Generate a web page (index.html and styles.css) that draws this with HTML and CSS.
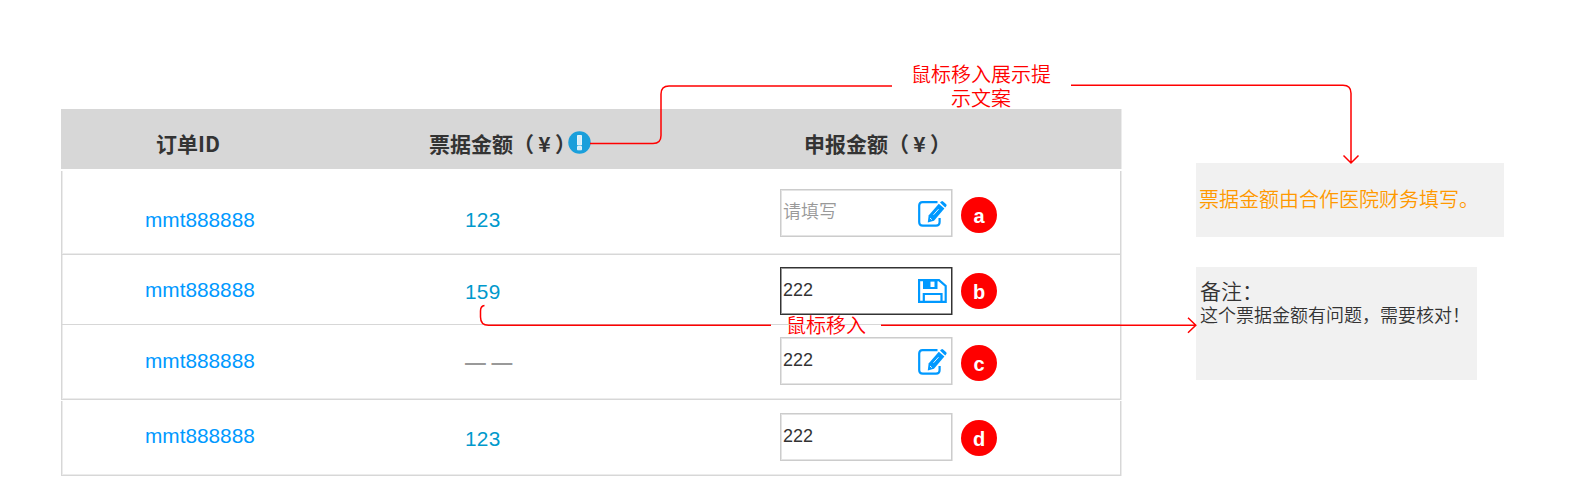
FILE: index.html
```
<!DOCTYPE html>
<html lang="zh-CN">
<head>
<meta charset="utf-8">
<title>票据金额</title>
<link rel="stylesheet" href="styles.css">
</head>
<body>
<svg class="defs" width="0" height="0">
  <symbol id="edit" viewBox="0 0 29 26">
    <path d="M19.500 1.200H4.500Q1.200 1.200 1.200 4.500V21Q1.200 24.600 4.800 24.600H18Q21.600 24.600 21.600 21V17" fill="none" stroke="#09f" stroke-width="2.200"/>
    <path d="M20.800 2.800L26.400 7.600L16 19.800L9.800 21.500L10.600 14.400Z" fill="#09f"/>
    <path d="M22 1.600L23.300 .4Q24.300 -.3 25.400 .7L28.200 3.300Q29 4.300 28.200 5.300L27.200 6.500Z" fill="#09f"/>
    <path d="M15.500 13.800L20.500 8.200M12 17L13.800 18.700" stroke="#fff" stroke-width=".9"/>
  </symbol>
  <symbol id="save" viewBox="0 0 29 24">
    <path d="M1.100 1.100H21L27.700 7V22.900H1.100Z" fill="none" stroke="#09f" stroke-width="2.200"/>
    <path d="M5 1H19.500V10H5ZM12.500 2.500V8H16.500V2.500Z" fill="#09f" fill-rule="evenodd"/>
    <path d="M5.800 22V15H23.500V22" fill="none" stroke="#09f" stroke-width="2.200"/>
  </symbol>
</svg>
<main class="board">
  <section class="table">
    <header class="row head">
      <div class="order">订单ID</div>
      <div class="bill">票据金额（<span class="yen">¥</span>）<svg class="info" viewBox="0 0 23 23"><circle cx="11.500" cy="11.500" r="11.200" fill="#1a9fdb"/><path d="M9.500 4.500H13.500V14H9.500ZM9.500 15.500H13.500V18.800H9.500Z" fill="#d7edf7" stroke="#e4f3fa"/></svg></div>
      <div class="claim">申报金额（<span class="yen">¥</span>）</div>
    </header>
    <div class="row r1">
      <div class="order">mmt888888</div>
      <div class="bill">123</div>
      <div class="field empty">请填写<svg class="icon edit"><use href="#edit"/></svg></div>
      <div class="badge">a</div>
    </div>
    <div class="row r2">
      <div class="order">mmt888888</div>
      <div class="bill">159</div>
      <div class="field active">222<svg class="icon save"><use href="#save"/></svg></div>
      <div class="badge">b</div>
    </div>
    <div class="row r3">
      <div class="order">mmt888888</div>
      <div class="bill none">— —</div>
      <div class="field">222<svg class="icon edit"><use href="#edit"/></svg></div>
      <div class="badge">c</div>
    </div>
    <div class="row r4">
      <div class="order">mmt888888</div>
      <div class="bill">123</div>
      <div class="field">222</div>
      <div class="badge">d</div>
    </div>
  </section>
  <aside class="notes">
    <div class="note tip">票据金额由合作医院财务填写。</div>
    <div class="note remark"><div class="title">备注：</div><div>这个票据金额有问题，需要核对！</div></div>
  </aside>
</main>
<svg class="wires" viewBox="0 0 1591 496">
  <path d="M590 143.500H653Q661 143.500 661 135.500V94Q661 86 669 86H892"/>
  <path d="M1071 85.200H1343Q1351 85.200 1351 93.200V163M1343.500 155.500L1351 163L1358.500 155.500"/>
  <path d="M484.500 305.500Q480.500 306 480.500 311V317Q480.500 325.300 488.500 325.300H771"/>
  <path d="M881 325.300H1196M1188 317.800L1195.800 325.300L1188 332.800"/>
</svg>
<div class="label hover-tip">鼠标移入展示提<br>示文案</div>
<div class="label hover">鼠标移入</div>
</body>
</html>
```
FILE: styles.css
```
* { box-sizing: border-box; }
body {
  margin: 0;
  width: 1591px;
  height: 496px;
  position: relative;
  overflow: hidden;
  background: #fff;
  color: #333;
  font-family: "Liberation Sans", "Noto Sans CJK SC", sans-serif;
}
.defs { position: absolute; }
.board { display: flex; padding: 109px 0 0 61px; }
.table { width: 1060px; }
.row {
  display: grid;
  grid-template-columns: 83px 320px 315px 181px 36px;
  border: 1px solid #d7d7d7;
  border-top: 0;
  box-shadow: inset 1px 0 #ececec, inset 0 -1px #ececec, 1px 0 #ececec;
  align-items: start;
}
.row > .order { grid-column: 2; }
.row .order, .row .bill { font-size: 20.8px; line-height: 24px; white-space: nowrap; }
.order { color: #09f; letter-spacing: 0; }
.bill { color: #0099cc; letter-spacing: .3px; }
.head {
  height: 60px;
  margin-bottom: 2px;
  border: 0;
  box-shadow: 1px 0 #ececec;
  background: #d7d7d7;
  grid-template-columns: 95px 273px 375px 200px;
  font-family: "Noto Sans CJK SC", sans-serif;
  font-weight: bold;
}
.head > div, .head .order, .head .bill {
  display: flex;
  padding-top: 18px;
  color: #333;
  font-size: 21px;
  line-height: 32px;
  letter-spacing: 0;
}
.yen { width: 21px; text-align: center; }
.info { width: 23px; height: 23px; margin: 4px 0 0 -8px; }
.r1 { height: 84px; }
.r2 { height: 70px; box-shadow: inset 1px 0 #ececec, 1px 0 #ececec; }
.r3 { height: 75px; margin-bottom: 1px; }
.r4 { height: 75px; }
.r1 .order, .r1 .bill { padding-top: 37px; }
.r2 .order { padding-top: 23px; }
.r2 .bill { padding-top: 25px; }
.r3 .order { padding-top: 24px; }
.r3 .bill { padding-top: 25px; }
.r4 .order { padding-top: 23px; }
.r4 .bill { padding-top: 26px; }
.row .none { color: #999; font-weight: bold; letter-spacing: 0; }
.field {
  width: 172px;
  height: 48px;
  margin-top: 12px;
  padding: 0 4px 3px 2px;
  display: flex;
  align-items: center;
  justify-content: space-between;
  border: 1px solid #ccc;
  box-shadow: inset 1px 1px #e4e4e4, inset 0 -1px #e4e4e4, 1px 0 #e4e4e4;
  font-size: 18px;
  line-height: 24px;
}
.r1 .field { margin-top: 18px; }
.empty { color: #999; font-weight: 350; }
.active { border-color: #333; box-shadow: inset 1px 1px #999, inset 0 -1px #999, 1px 0 #999; }
.icon { width: 29px; height: 26px; margin-top: 5px; }
.save { height: 24px; margin-top: 3px; }
.badge {
  width: 36px;
  height: 36px;
  border-radius: 50%;
  background: #f00;
  color: #fff;
  font-size: 20px;
  font-weight: bold;
  line-height: 38px;
  text-align: center;
}
.r1 .badge { margin-top: 26px; }
.r2 .badge { margin-top: 18px; }
.r3 .badge { margin-top: 20px; }
.r4 .badge { margin-top: 19px; }
.notes {
  margin-left: 75px;
  padding-top: 54px;
  font-family: "Noto Sans CJK SC", sans-serif;
  font-weight: 350;
}
.note { background: #f1f1f1; white-space: nowrap; }
.tip {
  width: 308px;
  height: 74px;
  padding-left: 3px;
  color: #f90;
  font-size: 20px;
  line-height: 72px;
}
.remark {
  width: 281px;
  height: 113px;
  margin-top: 30px;
  padding: 11px 0 0 4px;
  font-size: 18px;
  line-height: 24px;
}
.title { font-size: 21px; }
.wires { position: absolute; left: 0; top: 0; width: 1591px; height: 496px; fill: none; stroke: #f00; stroke-width: 1.5; }
.label {
  position: absolute;
  color: #f00;
  font: 350 20px/24px "Noto Sans CJK SC", sans-serif;
  text-align: center;
  white-space: nowrap;
}
.hover-tip { left: 911px; top: 62px; }
.hover { left: 786px; top: 313px; }
```
